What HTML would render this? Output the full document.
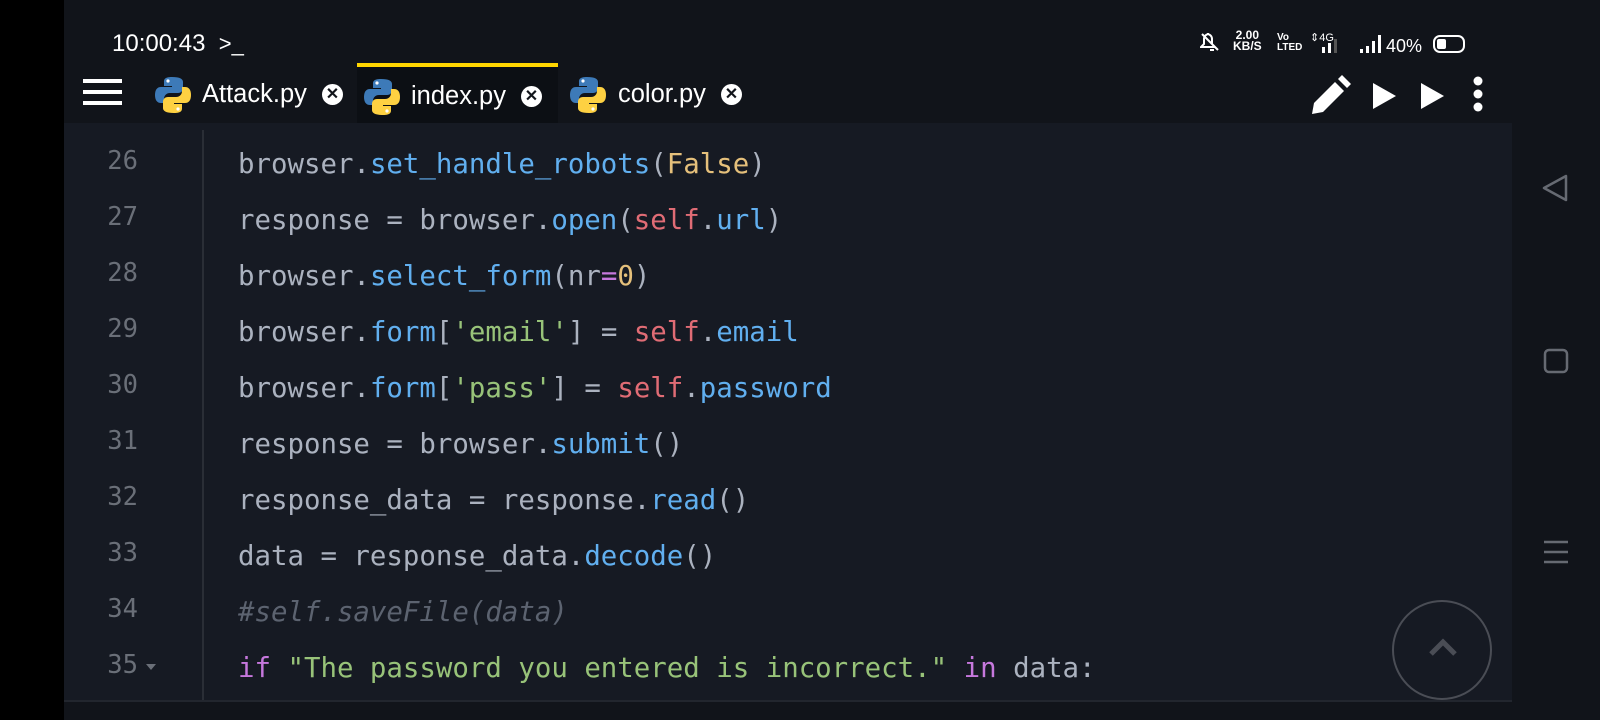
<!DOCTYPE html>
<html><head><meta charset="utf-8"><style>
*{margin:0;padding:0;box-sizing:border-box}
body{width:1600px;height:720px;background:#000;overflow:hidden;position:relative;font-family:"Liberation Sans",sans-serif}
#app{position:absolute;left:64px;top:0;width:1536px;height:720px;background:#11141a}
#code{position:absolute;left:64px;top:123px;width:1448px;height:577px;background:#161a23}
#bot{position:absolute;left:64px;top:700px;width:1448px;height:2px;background:#22262e}
#gut{position:absolute;left:202px;top:130px;width:2px;height:570px;background:#2a2e36}
.ln{position:absolute;left:64px;width:101px;text-align:right;padding-right:27px;font-family:"DejaVu Sans Mono",monospace;font-size:25.5px;color:#6a6f78}
.cl{position:absolute;left:238px;font-family:"DejaVu Sans Mono",monospace;font-size:27.4px;color:#abb2bf;white-space:pre}
.b{color:#61afef}.g{color:#98c379}.r{color:#e06c75}.y{color:#e5c07b}.p{color:#c678dd}.c{color:#5c6370;font-style:italic}
.tab{position:absolute;top:69px;height:51px;font-size:25.5px;color:#fff;display:flex;align-items:center}
.x{display:inline-block;width:21px;height:21px;border-radius:50%;background:#fff;color:#11141a;font-size:16px;font-weight:bold;text-align:center;line-height:21px;margin-left:15px}
</style></head><body>
<div id="app"></div>
<div id="code"></div>
<div id="bot"></div>
<div id="gut"></div>
<div style="position:absolute;left:112px;top:30px;color:#fff;font-size:24px">10:00:43&nbsp;&nbsp;<span style="font-size:22px">&gt;_</span></div>
<div style="position:absolute;left:1233px;top:30px;color:#fff;font-size:12px;font-weight:bold;line-height:11px;text-align:center">2.00<br>KB/S</div>
<div style="position:absolute;left:1277px;top:33px;color:#fff;font-size:10px;font-weight:bold;line-height:10px">Vo<br>LTED</div>
<div style="position:absolute;left:1310px;top:31px;color:#fff;font-size:11px">⇕4G</div>
<svg style="position:absolute;left:1200px;top:30px" width="400" height="30">
<path d="M7 4 a5 5 0 0 1 5 5 v5 l3 3 h-14 l3-3 v-5 a5 5 0 0 1 5-5z M10 20 h4 M2 4 l16 16" stroke="#fff" stroke-width="2" fill="none"/>
<rect x="122" y="17" width="3" height="6" fill="#fff"/><rect x="128" y="13" width="3" height="10" fill="#fff"/><rect x="134" y="9" width="3" height="14" fill="#555"/>
<rect x="160" y="19" width="3" height="4" fill="#fff"/><rect x="166" y="16" width="3" height="7" fill="#fff"/><rect x="172" y="11" width="3" height="12" fill="#fff"/><rect x="178" y="5" width="3" height="18" fill="#fff"/>
<text x="186" y="22" fill="#fff" font-size="18" font-family="Liberation Sans">40%</text>
<rect x="234" y="6" width="30" height="16" rx="6" stroke="#fff" stroke-width="2" fill="none"/><rect x="237" y="9" width="9" height="10" rx="2" fill="#fff"/>
</svg>
<div style="position:absolute;left:83px;top:79px;width:39px;height:4px;background:#fff;box-shadow:0 11px 0 #fff,0 22px 0 #fff"></div>
<div style="position:absolute;left:357px;top:63px;width:201px;height:60px;background:#0c0f14;border-top:4px solid #ffd600"></div>
<svg width="0" height="0" style="position:absolute"><defs><g id="py"><path d="M19 2c-8 0-8 3-8 5v4h8v1H8c-4 0-6 3-6 8s2 8 6 8h3v-4c0-3 2-6 6-6h8c3 0 5-2 5-5V7c0-3-3-5-11-5z" fill="#3d7ab8"/><path d="M21 38c8 0 8-3 8-5v-4h-8v-1h11c4 0 6-3 6-8s-2-8-6-8h-3v4c0 3-2 6-6 6h-8c-3 0-5 2-5 5v6c0 3 3 5 11 5z" fill="#fed142"/><circle cx="15" cy="6" r="1.6" fill="#fff"/><circle cx="25" cy="34" r="1.6" fill="#fff"/></g></defs></svg>
<div class="tab" style="left:153px"><svg width="40" height="40"><use href="#py"/></svg><span style="margin-left:9px">Attack.py</span><span class="x">✕</span></div>
<div class="tab" style="left:362px;top:71px"><svg width="40" height="40"><use href="#py"/></svg><span style="margin-left:9px">index.py</span><span class="x">✕</span></div>
<div class="tab" style="left:568px"><svg width="40" height="40"><use href="#py"/></svg><span style="margin-left:10px">color.py</span><span class="x">✕</span></div>
<svg style="position:absolute;left:1310px;top:74px" width="180" height="42">
<path d="M2 40 l2-11 L25 8 l9 9 L13 38 z" fill="#fff"/><path d="M28 5 l4-4 l9 9 l-4 4z" fill="#fff"/>
<path d="M63 9 v26 l23-13z" fill="#fff"/>
<path d="M111 9 v26 l23-13z" fill="#fff"/>
<circle cx="168" cy="7" r="4.5" fill="#fff"/><circle cx="168" cy="20" r="4.5" fill="#fff"/><circle cx="168" cy="33" r="4.5" fill="#fff"/>
</svg>
<div class="ln" style="top:146px">26</div><div class="cl" style="top:149px">browser.<span class="b">set_handle_robots</span>(<span class="y">False</span>)</div>
<div class="ln" style="top:202px">27</div><div class="cl" style="top:205px">response = browser.<span class="b">open</span>(<span class="r">self</span>.<span class="b">url</span>)</div>
<div class="ln" style="top:258px">28</div><div class="cl" style="top:261px">browser.<span class="b">select_form</span>(nr<span class="p">=</span><span class="y">0</span>)</div>
<div class="ln" style="top:314px">29</div><div class="cl" style="top:317px">browser.<span class="b">form</span>[<span class="g">'email'</span>] = <span class="r">self</span>.<span class="b">email</span></div>
<div class="ln" style="top:370px">30</div><div class="cl" style="top:373px">browser.<span class="b">form</span>[<span class="g">'pass'</span>] = <span class="r">self</span>.<span class="b">password</span></div>
<div class="ln" style="top:426px">31</div><div class="cl" style="top:429px">response = browser.<span class="b">submit</span>()</div>
<div class="ln" style="top:482px">32</div><div class="cl" style="top:485px">response_data = response.<span class="b">read</span>()</div>
<div class="ln" style="top:538px">33</div><div class="cl" style="top:541px">data = response_data.<span class="b">decode</span>()</div>
<div class="ln" style="top:594px">34</div><div class="cl c" style="top:597px">#self.saveFile(data)</div>
<div class="ln" style="top:650px">35</div><div style="position:absolute;left:146px;top:664px;width:0;height:0;border-left:5px solid transparent;border-right:5px solid transparent;border-top:6px solid #6a6f78"></div>
<div class="cl" style="top:653px"><span class="p">if</span> <span class="g">"The password you entered is incorrect."</span> <span class="p">in</span> data:</div>
<div style="position:absolute;left:1392px;top:600px;width:100px;height:100px;border-radius:50%;border:2px solid #4a4d55"></div>
<svg style="position:absolute;left:1428px;top:638px" width="30" height="20"><path d="M3 16 L15 4 L27 16" stroke="#4a4d55" stroke-width="5" fill="none"/></svg>
<svg style="position:absolute;left:1540px;top:170px" width="40" height="400">
<path d="M4 18 L26 6 V30 Z" stroke="#666a72" stroke-width="2.5" fill="none" stroke-linejoin="round"/>
<rect x="5" y="180" width="22" height="22" rx="4" stroke="#666a72" stroke-width="2.5" fill="none"/>
<path d="M4 372 h24 M4 382 h24 M4 392 h24" stroke="#666a72" stroke-width="2.5"/>
</svg>
</body></html>
